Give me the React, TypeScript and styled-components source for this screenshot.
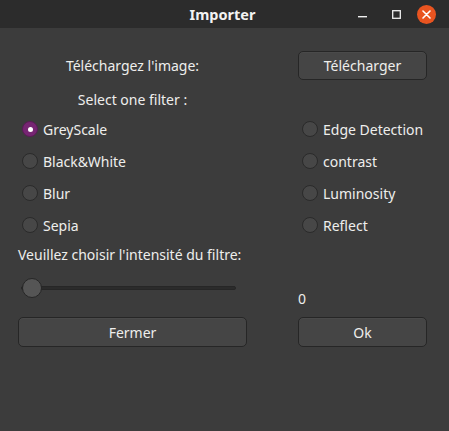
import React, { useState } from "react";
import styled, { createGlobalStyle } from "styled-components";

const Global = createGlobalStyle`
  html, body { margin: 0; padding: 0; background: #3c3c3c; }
  body { font-family: "Noto Sans", "DejaVu Sans", sans-serif; color: #eeeeec; }
  * { box-sizing: border-box; }
`;

const Window = styled.div`
  width: 449px;
  height: 431px;
  display: flex;
  flex-direction: column;
  background: #3c3c3c;
`;

const TitleBar = styled.div`
  height: 28px;
  background: #2c2c2c;
  position: relative;
  display: flex;
  align-items: center;
  justify-content: center;
`;

const Title = styled.div`
  font-weight: 700;
  font-size: 14.5px;
  color: #f3f3f3;
  margin-top: -1px;
  margin-left: -4px;
`;

const Controls = styled.div`
  position: absolute;
  right: 10px;
  top: 0;
  height: 28px;
  display: flex;
  align-items: center;
  gap: 0;
`;

const Ctrl = styled.div<{ $w: number }>`
  width: ${(p) => p.$w}px;
  height: 28px;
  display: flex;
  align-items: center;
  justify-content: center;
`;

const CloseBtn = styled.div`
  width: 19px;
  height: 19px;
  border-radius: 50%;
  background: #e95420;
  display: flex;
  align-items: center;
  justify-content: center;
`;

const Body = styled.div`
  flex: 1;
  display: flex;
  flex-direction: column;
  padding: 23px 22px 0 18px;
`;

const Row = styled.div<{ $h: number; $mt?: number }>`
  display: grid;
  grid-template-columns: 229px 129px;
  column-gap: 51px;
  height: ${(p) => p.$h}px;
  margin-top: ${(p) => p.$mt ?? 0}px;
  align-items: center;
`;

const CenterLabel = styled.div`
  font-size: 14px;
  text-align: center;
  line-height: 20px;
`;

const Label = styled.div`
  font-size: 14px;
  line-height: 20px;
`;

const Button = styled.button`
  height: 100%;
  width: 100%;
  background: #454545;
  border: 1px solid #262626;
  border-radius: 5px;
  color: #eeeeec;
  font-family: inherit;
  font-size: 14px;
  padding: 0;
  box-shadow: inset 0 1px 0 rgba(255, 255, 255, 0.03);
`;

const RadioLabel = styled.label`
  display: flex;
  align-items: center;
  gap: 5px;
  padding-left: 4px;
  font-size: 14px;
  white-space: nowrap;
`;

const RadioInput = styled.input`
  appearance: none;
  margin: 0;
  width: 16px;
  height: 16px;
  border-radius: 50%;
  background: #474747;
  border: 1px solid #2a2a2a;
  position: relative;
  flex: none;
  &:checked {
    background: #762572;
    border-color: #5a1b57;
  }
  &:checked::after {
    content: "";
    position: absolute;
    left: 4.5px;
    top: 4.5px;
    width: 5px;
    height: 5px;
    border-radius: 50%;
    background: #fff;
  }
`;

const SliderRow = styled.div`
  display: grid;
  grid-template-columns: 229px 129px;
  column-gap: 51px;
  height: 32px;
  margin-top: 13px;
`;

const Range = styled.input`
  appearance: none;
  -webkit-appearance: none;
  margin: 0 0 0 3px;
  width: 215px;
  height: 20px;
  background: transparent;
  align-self: start;
  &::-webkit-slider-runnable-track {
    height: 4px;
    background: #2b2b2b;
    border-radius: 2px;
    border: 1px solid #262626;
  }
  &::-webkit-slider-thumb {
    -webkit-appearance: none;
    width: 20px;
    height: 20px;
    margin-top: -9px;
    border-radius: 50%;
    background: #555555;
    border: 1px solid #262626;
  }
`;

const Value = styled.div`
  align-self: end;
  font-size: 14px;
  line-height: 20px;
  padding-bottom: 1px;
`;

const filtersLeft = ["GreyScale", "Black&White", "Blur", "Sepia"];
const filtersRight = ["Edge Detection", "contrast", "Luminosity", "Reflect"];

export default function App() {
  const [sel, setSel] = useState("GreyScale");
  const [val, setVal] = useState(0);
  return (
    <>
      <Global />
      <Window>
        <TitleBar>
          <Title>Importer</Title>
          <Controls>
            <Ctrl $w={34}>
              <svg width="9" height="10" viewBox="0 0 9 10">
                <rect x="0" y="7" width="9" height="1.4" fill="#f0f0f0" />
              </svg>
            </Ctrl>
            <Ctrl $w={34}>
              <svg width="9" height="9" viewBox="0 0 9 9">
                <rect x="0.7" y="0.7" width="7.6" height="7.6" fill="none" stroke="#f0f0f0" strokeWidth="1.3" />
              </svg>
            </Ctrl>
            <Ctrl $w={26}>
              <CloseBtn>
                <svg width="9" height="9" viewBox="0 0 9 9">
                  <path d="M1 1L8 8M8 1L1 8" stroke="#fff" strokeWidth="1.6" strokeLinecap="round" />
                </svg>
              </CloseBtn>
            </Ctrl>
          </Controls>
        </TitleBar>
        <Body>
          <Row $h={29}>
            <CenterLabel>Téléchargez l'image:</CenterLabel>
            <Button>Télécharger</Button>
          </Row>
          <Row $h={20} $mt={10}>
            <CenterLabel>Select one filter :</CenterLabel>
            <div />
          </Row>
          {filtersLeft.map((l, i) => (
            <Row $h={32} $mt={i === 0 ? 3 : 0} key={l}>
              <RadioLabel>
                <RadioInput type="radio" name="f" checked={sel === l} onChange={() => setSel(l)} />
                {l}
              </RadioLabel>
              <RadioLabel>
                <RadioInput
                  type="radio"
                  name="f"
                  checked={sel === filtersRight[i]}
                  onChange={() => setSel(filtersRight[i])}
                />
                {filtersRight[i]}
              </RadioLabel>
            </Row>
          ))}
          <Row $h={20} $mt={4}>
            <Label>Veuillez choisir l'intensité du filtre:</Label>
          </Row>
          <SliderRow>
            <Range type="range" min={0} max={100} value={val} onChange={(e) => setVal(Number(e.target.value))} />
            <Value>{val}</Value>
          </SliderRow>
          <Row $h={30} $mt={7}>
            <Button>Fermer</Button>
            <Button>Ok</Button>
          </Row>
        </Body>
      </Window>
    </>
  );
}
